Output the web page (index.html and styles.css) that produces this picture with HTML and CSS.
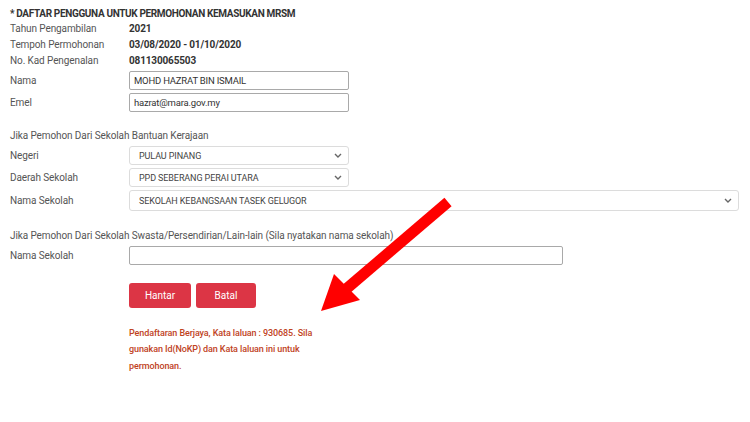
FILE: index.html
```html
<!DOCTYPE html>
<html>
<head>
<meta charset="utf-8">
<link rel="stylesheet" href="styles.css">
</head>
<body>
<div class="page">
  <div class="title">* DAFTAR PENGGUNA UNTUK PERMOHONAN KEMASUKAN MRSM</div>
  <div class="row text"><span class="label">Tahun Pengambilan</span><span class="value">2021</span></div>
  <div class="row text"><span class="label">Tempoh Permohonan</span><span class="value">03/08/2020 - 01/10/2020</span></div>
  <div class="row text"><span class="label">No. Kad Pengenalan</span><span class="value">081130065503</span></div>
  <div class="row field first"><span class="label">Nama</span><div class="input w220">MOHD HAZRAT BIN ISMAIL</div></div>
  <div class="row field"><span class="label">Emel</span><div class="input w220">hazrat@mara.gov.my</div></div>

  <div class="section">Jika Pemohon Dari Sekolah Bantuan Kerajaan</div>
  <div class="row field first"><span class="label">Negeri</span><div class="select w220"><span>PULAU PINANG</span><svg class="chev" viewBox="0 0 8 5" width="8" height="5"><path d="M1 1 L4 4 L7 1" fill="none" stroke="#666" stroke-width="1.4"/></svg></div></div>
  <div class="row field"><span class="label">Daerah Sekolah</span><div class="select w220"><span>PPD SEBERANG PERAI UTARA</span><svg class="chev" viewBox="0 0 8 5" width="8" height="5"><path d="M1 1 L4 4 L7 1" fill="none" stroke="#666" stroke-width="1.4"/></svg></div></div>
  <div class="row field"><span class="label">Nama Sekolah</span><div class="select wide"><span>SEKOLAH KEBANGSAAN TASEK GELUGOR</span><svg class="chev" viewBox="0 0 8 5" width="8" height="5"><path d="M1 1 L4 4 L7 1" fill="none" stroke="#666" stroke-width="1.4"/></svg></div></div>

  <div class="section second">Jika Pemohon Dari Sekolah Swasta/Persendirian/Lain-lain (Sila nyatakan nama sekolah)</div>
  <div class="row field first"><span class="label">Nama Sekolah</span><div class="input w434"></div></div>

  <div class="actions">
    <button class="btn hantar">Hantar</button>
    <button class="btn batal">Batal</button>
  </div>
  <p class="message">Pendaftaran Berjaya, Kata laluan : 930685. Sila gunakan Id(NoKP) dan Kata laluan ini untuk permohonan.</p>

  <svg class="arrow" width="750" height="422" viewBox="0 0 750 422">
    <line x1="448" y1="202" x2="345" y2="290" stroke="#ff0000" stroke-width="11"/>
    <polygon points="321,311 334,274 360,300" fill="#ff0000"/>
  </svg>
</div>
</body>
</html>
```

FILE: styles.css
```css
html, body {
  margin: 0;
  padding: 0;
  background: #ffffff;
}
.page {
  position: relative;
  width: 750px;
  height: 422px;
  padding: 7px 0 0 10px;
  box-sizing: border-box;
  font-family: Roboto, "Liberation Sans", sans-serif;
  font-size: 10px;
  color: #555;
  overflow: hidden;
}
.title {
  line-height: 14px;
  font-weight: bold;
  color: #333;
  letter-spacing: -0.35px;
}
.row {
  display: grid;
  grid-template-columns: 119px auto;
  align-items: center;
  justify-items: start;
}
.row.text {
  height: 16px;
  line-height: 16px;
}
.label {
  color: #555;
  letter-spacing: -0.1px;
}
.value {
  font-weight: bold;
  color: #333;
  letter-spacing: -0.15px;
}
.row.field {
  margin-top: 3px;
}
.row.field.first {
  margin-top: 2px;
}
.input {
  box-sizing: border-box;
  height: 19px;
  border: 1px solid #a9a9a9;
  border-radius: 2px;
  padding: 0 4px;
  line-height: 17px;
  font-size: 9.5px;
  color: #333;
  letter-spacing: -0.2px;
}
.w220 { width: 220px; }
.w434 { width: 434px; }
.select {
  box-sizing: border-box;
  height: 19px;
  border: 1px solid #dcdcdc;
  border-radius: 3px;
  padding: 0 6px 0 9px;
  display: flex;
  align-items: center;
  justify-content: space-between;
  font-size: 9px;
  color: #444;
  letter-spacing: -0.1px;
}
.select.wide {
  width: 610px;
  height: 21px;
}
.chev { flex: none; }
.section {
  margin-top: 16px;
  line-height: 16px;
  color: #555;
  letter-spacing: -0.1px;
}
.section.second {
  margin-top: 17px;
}
.actions {
  display: flex;
  gap: 5px;
  margin: 18px 0 0 119px;
}
.btn {
  height: 25px;
  border: none;
  border-radius: 3px;
  background: #dc3545;
  color: #fff;
  font-family: Roboto, "Liberation Sans", sans-serif;
  font-size: 10px;
  padding: 0;
}
.hantar { width: 62px; }
.batal { width: 60px; }
.message {
  margin: 17px 0 0 119px;
  width: 190px;
  line-height: 16.3px;
  font-size: 9px;
  font-weight: 500;
  color: #c0431e;
  letter-spacing: -0.1px;
}
.arrow {
  position: absolute;
  left: 0;
  top: 0;
}
```
